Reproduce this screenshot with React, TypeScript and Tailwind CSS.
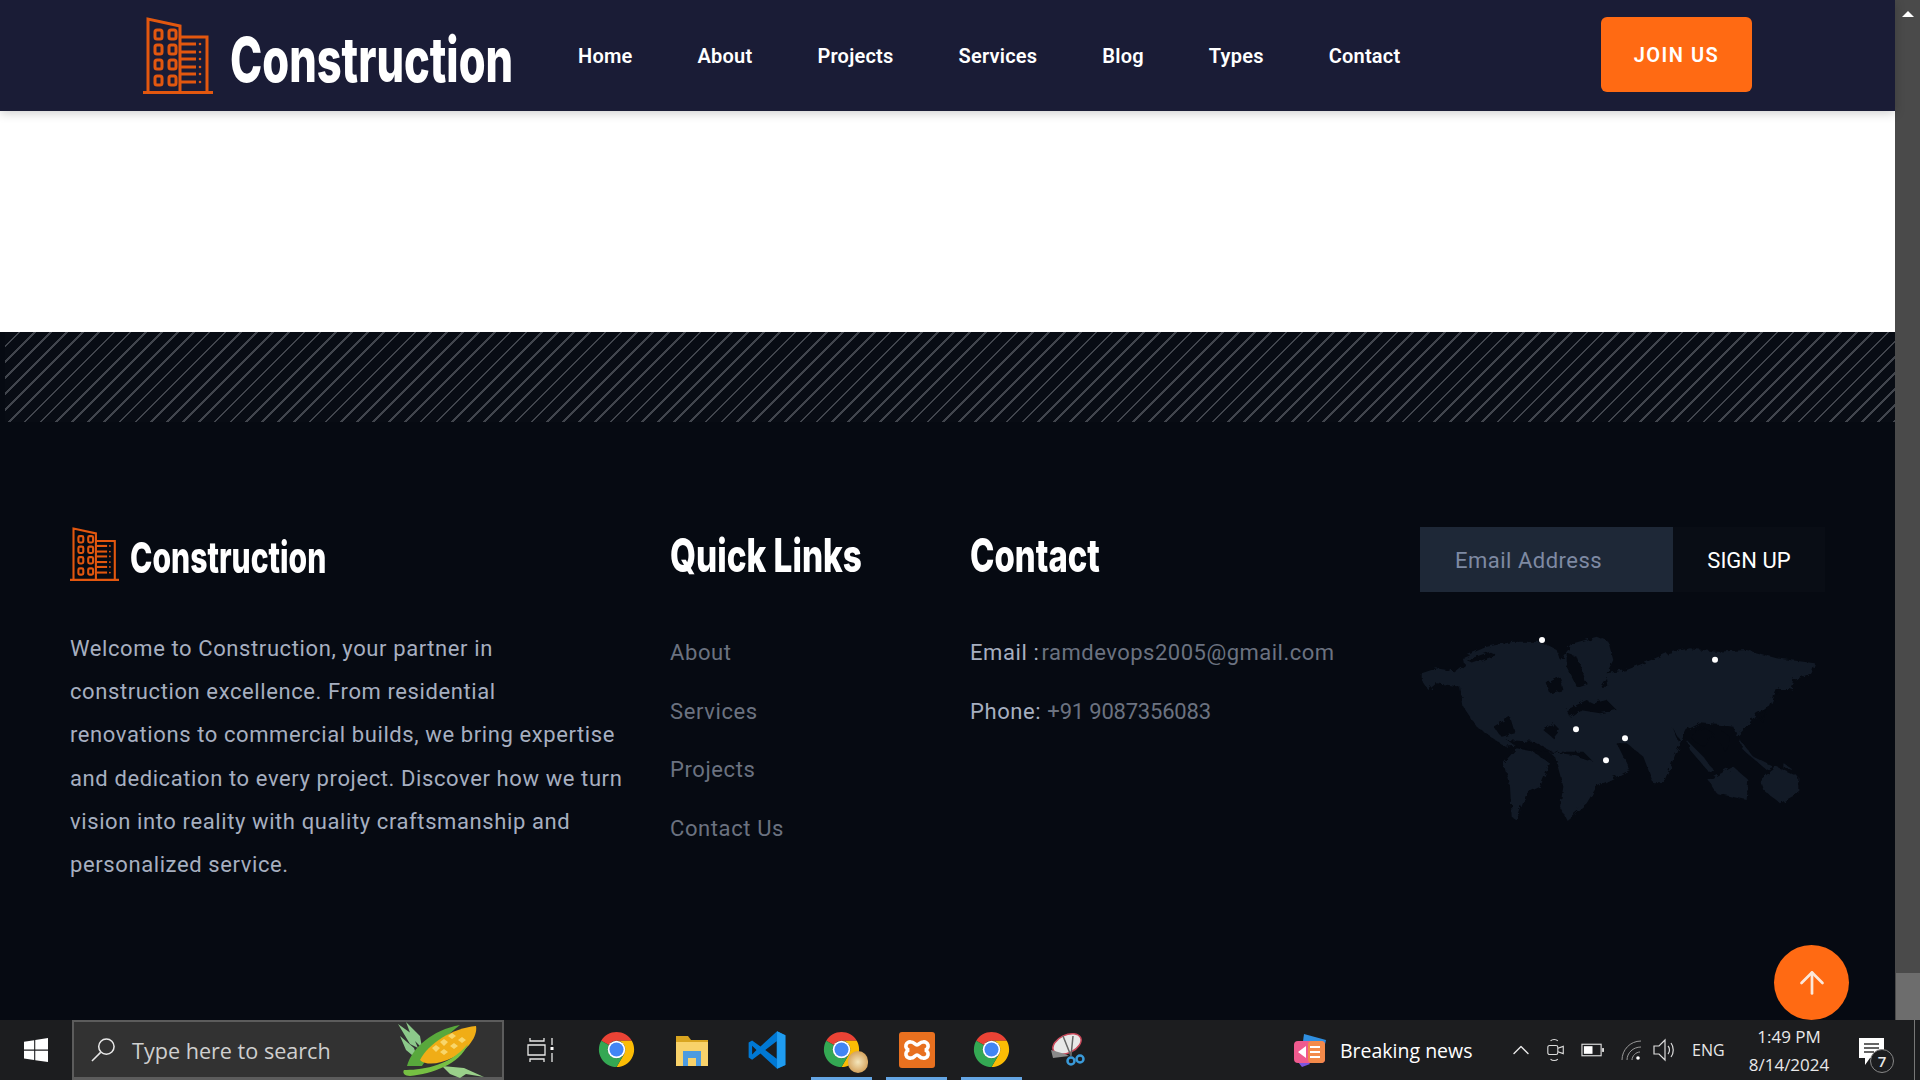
import { ArrowUp, ChevronUp } from "lucide-react";

const navItems = ["Home", "About", "Projects", "Services", "Blog", "Types", "Contact"];
const quickLinks = ["About", "Services", "Projects", "Contact Us"];
const aboutLines = [
  "Welcome to Construction, your partner in",
  "construction excellence. From residential",
  "renovations to commercial builds, we bring expertise",
  "and dedication to every project. Discover how we turn",
  "vision into reality with quality craftsmanship and",
  "personalized service.",
];

function BuildingLogo({ className }: { className: string }) {
  const rows = [13, 28, 43, 59];
  const lines = [27, 35, 42, 50, 57, 65];
  return (
    <svg viewBox="0 0 70 77" className={className} fill="none" stroke="#e2570f" strokeWidth="3">
      <path d="M5 75V2l32 7v66M37 20h27v55M0 75.500h70" />
      {rows.map((y) => (
        <g key={y}>
          <rect x="12" y={y} width="7" height="9" rx="2" />
          <rect x="26" y={y} width="7" height="9" rx="2" />
        </g>
      ))}
      {lines.map((y) => (
        <g key={y}>
          <path d={`M38 ${y}h15`} />
          <circle cx="57" cy={y} r="1.300" fill="#e2570f" stroke="none" />
        </g>
      ))}
    </svg>
  );
}

function Chrome() {
  return (
    <svg viewBox="3 3 42 42" className="h-[37px] w-[37px]">
      <path fill="#ea4335" d="M6.680 14A20 20 0 0 1 41.320 14H24a10 10 0 0 0-8.660 5z" />
      <path fill="#fbbc05" d="M41.320 14A20 20 0 0 1 24 44l8.660-15A10 10 0 0 0 24 14z" />
      <path fill="#34a853" d="M24 44A20 20 0 0 1 6.680 14l8.660 5a10 10 0 0 0 17.320 10z" />
      <circle cx="24" cy="24" r="10" fill="#fff" />
      <circle cx="24" cy="24" r="8" fill="#4285f4" />
    </svg>
  );
}

function WorldMap() {
  return (
    <svg viewBox="60 375 1215 570" className="mt-[43px] h-[190px] w-[405px]">
      <defs>
        <filter id="coast" x="-5%" y="-5%" width="110%" height="110%" colorInterpolationFilters="sRGB">
          <feTurbulence type="fractalNoise" baseFrequency="0.06" numOctaves="3" seed="4" />
          <feDisplacementMap in="SourceGraphic" scale="18" />
        </filter>
      </defs>
      <g filter="url(#coast)">
        <g fill="#121a26">
          <path d="M65 490l45-15 60 10 25-20-5-25 70-30 80-15 80 0 50 25 10 30 40-50 70-20 35 15 15 55-20 40 60-10 50-20 70-30 70-15 80 10 90-5 90 25 115 15-10 30-55 20-10 30-40 0-20 50-40 20-30 40-30 30-10-30-40-5-60-5-40 20-20 40-50 120-30 0-30-80-50-40-30 0 40 80-80 40-20 10-30 50-60 50-20-40 10-60-25-90-25-20-40-20-80 10-20-10-70-50-40-60-10-60-70-10-25 20-20-30z" />
          <path d="M310 760l40-45 50 10 50 35-30 70-40 20-30 80-15-10-5-90z" />
          <path d="M925 810l75-40 45 40-5 60-90-20z" />
          <path d="M1080 810l50-40 65 30 0 50-55 30-50-40z" />
          <path d="M860 690l50 50 30 40-10 10-60-70zM1020 690l40 50 60 30-20 10-70-60zM1150 760l30 20-30-5z" />
        </g>
        <g fill="#060a12">
          <path d="M440 520l40-20 10 40-40 10zM500 430l30 10 30 80-30 10-30-60zM280 650l50-30 15 50-40 10zM430 660l30-20 20 20-20 25zM500 600l60-30 20 10 40-10 30 30-50 10-60-10-30 20zM320 690l80 5 60 30 90 0 30 30-60-20-70-10-90-10zM815 650l25 40-5 5zM200 450l70-25 20 10-70 25zM600 530l20-30 5 30z" />
          <path d="M870 680l40-30 30 20-20 40-30-10zM960 660l30 20-10 50-20-30zM1100 590l-20 40 10 10zM1140 530l-20 30 15-10z" />
        </g>
      </g>
      <g fill="#fff">
        <circle cx="426" cy="390" r="9" />
        <circle cx="945" cy="449" r="9" />
        <circle cx="528" cy="658" r="9" />
        <circle cx="675" cy="685" r="9" />
        <circle cx="618" cy="751" r="9" />
      </g>
    </svg>
  );
}

function Corn() {
  return (
    <svg viewBox="0 0 88 56" className="h-[56px] w-[88px]">
      <path fill="#8cc98a" d="M0 2l14 10 6 14-8-4zM8 0l14 14 2 12-10-10zM2 14l14 12 4 12-12-10z" />
      <path fill="#9ad08a" d="M44 44l22 2 20 9-18-3-6 4-10-4z" />
      <path fill="#58a83c" d="M9 44C14 26 34 8 62 3 50 12 34 28 24 44z" />
      <path fill="#f0ad16" d="M22 38C30 22 54 6 78 4c2 10-8 24-24 32-12 6-26 8-32 2z" />
      <path fill="#f8d66a" d="M34 26l4-3 4 3-4 4zM42 20l4-3 4 3-4 4zM50 14l4-3 4 3-4 3zM42 30l4-3 4 3-4 3zM52 24l4-3 4 3-4 3zM60 18l4-3 4 3-4 3z" />
      <path fill="#76c043" d="M6 48c14 0 44-2 64-26-8 20-36 30-58 32-5 0-8-3-6-6z" />
    </svg>
  );
}

function Taskbar() {
  return (
    <div className="relative flex h-[60px] shrink-0 items-center bg-[#1c1d1f] font-['Open_Sans',sans-serif]">
      <div className="flex w-[72px] justify-center">
        <svg viewBox="0 0 26 26" className="h-[24px] w-[26px]" fill="#fff">
          <path d="M0 4l11-1.600v10H0zM12.200 2.200L26 0v12.400H12.200zM0 13.800h11v10L0 22.200zM12.200 13.800H26V26l-13.800-2z" />
        </svg>
      </div>
      <div className="flex h-[60px] w-[432px] items-center border-2 border-b-[3px] border-[#5c5c5c] bg-[#323232] pl-[17px]">
        <svg viewBox="0 0 26 26" className="h-[25px] w-[25px]" fill="none" stroke="#e8e8e8" strokeWidth="1.600">
          <circle cx="16" cy="10" r="8" />
          <path d="M10 16L1 25" />
        </svg>
        <span className="ml-[16px] flex-1 pt-[3px] text-[21.600px] text-[#cfcfcf]">Type here to search</span>
        <div className="mr-[16px] flex">
          <Corn />
        </div>
      </div>
      <div className="ml-[23px] w-[52px]">
        <svg viewBox="0 0 28 26" className="h-[26px] w-[28px]" fill="none" stroke="#e8e8e8" strokeWidth="1.300">
          <path d="M3 1v3h14V1M1 8h17v10H1zM3 25v-3h14v3M25 1v7M25 16v9" />
          <rect x="23.500" y="10" width="3" height="3" fill="#fff" stroke="none" />
        </svg>
      </div>
      <div className="flex h-full">
        <TaskIcon><Chrome /></TaskIcon>
        <TaskIcon>
          <svg viewBox="0 0 36 36" className="h-[36px] w-[36px]">
            <path fill="#d9a520" d="M2 4h12l3 4h17v8H2z" />
            <path fill="#f8d26a" d="M2 10h32v24H2z" />
            <path fill="#4d9be0" d="M9 34V19h18v15h-5v-8h-8v8z" />
          </svg>
        </TaskIcon>
        <TaskIcon>
          <svg viewBox="0 0 48 48" className="h-[42px] w-[42px]">
            <path fill="#0078d4" fillRule="evenodd" d="M35.500 2.500L16.500 20 7 13l-4 2.500v17L7 35l9.500-7 19 17.500L45 41V7zM35 14L22 24l13 10zM7 19l5 5-5 5z" />
            <path fill="#1f9cf0" d="M35.500 2.500L45 7v34l-9.500 4.500V34l0-20z" />
          </svg>
        </TaskIcon>
        <TaskIcon active>
          <div className="relative flex">
            <Chrome />
            <div className="absolute right-[-8px] bottom-[-5px] h-[22px] w-[20px] rounded-full bg-[radial-gradient(circle,#f4e6bc,#c98a3a)]" />
          </div>
        </TaskIcon>
        <TaskIcon active>
          <div className="flex h-[36px] w-[36px] items-center justify-center rounded-[3px] bg-[#e8701f]">
            <svg viewBox="0 0 28 28" className="h-[28px] w-[28px]" fill="none" stroke="#fff" strokeWidth="3.600">
              <path d="M8 6a4 4 0 0 0-2 8 4 4 0 0 0 2 8c3 0 4-3 6-3s3 3 6 3a4 4 0 0 0 2-8 4 4 0 0 0-2-8c-3 0-4 3-6 3s-3-3-6-3z" />
            </svg>
          </div>
        </TaskIcon>
        <TaskIcon active><Chrome /></TaskIcon>
        <TaskIcon>
          <svg viewBox="0 0 36 36" className="h-[36px] w-[36px]">
            <ellipse cx="18" cy="12" rx="15" ry="9" fill="#e8e8e8" stroke="#c8485a" strokeWidth="1.500" transform="rotate(-25 18 12)" />
            <path fill="#8a8a8a" d="M2 18l14 4 4 2-16 2z" />
            <path d="M14 4l8 20M24 4l-2 20" stroke="#666" strokeWidth="1.500" />
            <circle cx="22" cy="29" r="3.500" fill="none" stroke="#3a9ad9" strokeWidth="2.500" />
            <circle cx="31" cy="27" r="3.500" fill="none" stroke="#3a9ad9" strokeWidth="2.500" />
          </svg>
        </TaskIcon>
      </div>
      <div className="ml-auto flex h-full items-center">
        <svg viewBox="0 0 36 36" className="h-[38px] w-[36px]">
          <path fill="#2f8fe0" d="M12 2l22 6-5 22-20-6z" />
          <path fill="#7a55e0" d="M2 12l16 20-8 3-8-10z" />
          <rect x="2" y="9" width="31" height="22" rx="4" fill="#ef5a8e" />
          <rect x="16" y="9" width="17" height="22" rx="4" fill="#f38a4a" />
          <path fill="#fff" d="M6 20l8-6v12zM18 14h10v2H18zM18 19h10v2H18zM18 24h10v2H18z" />
        </svg>
        <span className="ml-[12px] w-[149px] pt-[1px] text-[19.500px] text-white">Breaking news</span>
        <ChevronUp className="ml-[18px] h-[28px] w-[28px] text-[#e8e8e8]" strokeWidth={1.200} />
        <svg viewBox="0 0 22 26" className="ml-[11px] h-[26px] w-[20px]" fill="none" stroke="#ddd" strokeWidth="1.200">
          <rect x="2" y="8" width="11" height="10" rx="2" />
          <path d="M13 11l6-2v8l-6-2M5 3c2-2 6-2 8 0M5 23c2 2 6 2 8 0" />
        </svg>
        <svg viewBox="0 0 24 14" className="ml-[15px] h-[14px] w-[23px]" fill="none" stroke="#ddd" strokeWidth="1.200">
          <rect x="1" y="1" width="20" height="12" />
          <rect x="3" y="3" width="9" height="8" fill="#fff" stroke="none" />
          <rect x="22" y="5" width="2" height="4" fill="#ddd" stroke="none" />
        </svg>
        <svg viewBox="0 0 22 22" className="ml-[16px] h-[22px] w-[22px]" fill="none" stroke="#999" strokeWidth="1">
          <path d="M2 21C2 11 10 2 21 2M7 21c0-7 6-13 14-13M12 21c0-4 4-8 8-8" />
          <circle cx="18" cy="19" r="1.800" fill="#fff" stroke="none" />
        </svg>
        <svg viewBox="0 0 24 24" className="ml-[10px] h-[24px] w-[24px]" fill="none" stroke="#ddd" strokeWidth="1.200">
          <path d="M2 8h5l6-6v20l-6-6H2zM16 8c2 2 2 6 0 8M19 5c3 4 3 10 0 14" />
        </svg>
        <span className="ml-[16px] w-[40px] text-[16px] text-[#e8e8e8]">ENG</span>
        <div className="ml-[11px] flex w-[92px] flex-col items-center pt-[1px] text-[17px] leading-[28px] text-[#e8e8e8]">
          <span>1:49 PM</span>
          <span>8/14/2024</span>
        </div>
        <div className="relative ml-[24px] mr-[36px] h-[24px] w-[25px]">
          <svg viewBox="0 0 25 28" className="h-[28px] w-[25px]">
            <path fill="#fff" d="M0 0h25v20H11l-5 7v-7H0z" />
            <path stroke="#333" strokeWidth="1.300" d="M5 6h15M5 10h15M5 14h10" />
          </svg>
          <span className="absolute top-[11px] left-[11px] flex h-[24px] w-[24px] items-center justify-center rounded-full border border-[#888] bg-[#1c1d1f] text-[15px] font-semibold text-[#e8e8e8]">
            7
          </span>
        </div>
      </div>
      <div className="absolute top-0 right-[5px] h-full w-px bg-[#777]" />
    </div>
  );
}

function TaskIcon({ children, active = false }: { children: React.ReactNode; active?: boolean }) {
  return (
    <div className="relative flex h-full w-[75px] items-center justify-center pb-[1px]">
      {children}
      {active ? <div className="absolute bottom-0 left-[7px] h-[3px] w-[61px] bg-[#64a5e3]" /> : null}
    </div>
  );
}

export default function App() {
  return (
    <div className="relative flex h-screen flex-col overflow-hidden font-['Roboto',sans-serif]">
      <div className="flex min-h-0 flex-1">
        <div className="flex min-w-0 flex-1 flex-col bg-[#060a12]">
          <header className="relative z-10 flex h-[111px] shrink-0 items-center bg-[#1a1c36] pl-[143px] shadow-[0_2px_10px_rgba(0,0,0,0.2)]">
            <BuildingLogo className="h-[77px] w-[70px]" />
            <span className="ml-[17px] w-[330px] origin-left scale-x-[0.7] pt-[8px] font-['Inter',sans-serif] text-[62px] leading-none font-extrabold whitespace-nowrap text-white">
              Construction
            </span>
            <nav className="ml-[18px] flex gap-[65px] text-[20px] font-semibold tracking-[0.22px] text-white">
              {navItems.map((item) => (
                <a key={item} href="#">{item}</a>
              ))}
            </nav>
            <a href="#" className="absolute top-[17px] left-[1601px] flex h-[75px] w-[151px] items-center justify-center rounded-[6px] bg-[#ff6a13] text-[20px] font-semibold tracking-[1.500px] text-white">
              JOIN US
            </a>
          </header>
          <div className="h-[221px] shrink-0 bg-white" />
          <div className="h-[90px] shrink-0 pl-[5px]">
            <div className="h-full bg-[repeating-linear-gradient(135deg,#080c14_0,#080c14_9.300px,#41454d_9.300px,#41454d_11.200px)]" />
          </div>
          <footer className="grid flex-1 grid-cols-[600px_300px_450px_405px] pt-[105px] pl-[70px]">
            <div>
              <div className="flex h-[54px] items-center">
                <BuildingLogo className="h-[54px] w-[49px]" />
                <span className="ml-[11px] origin-left scale-x-[0.7] pt-[6px] font-['Inter',sans-serif] text-[43px] leading-none font-extrabold whitespace-nowrap text-white">
                  Construction
                </span>
              </div>
              <p className="mt-[46px] text-[22px] leading-[43.200px] tracking-[0.6px] whitespace-nowrap text-[#a6afc0]">
                {aboutLines.map((line) => (
                  <span key={line} className="block">{line}</span>
                ))}
              </p>
            </div>
            <div>
              <h3 className="h-[56px] origin-left scale-x-[0.725] font-['Inter',sans-serif] text-[46px] leading-[56px] font-extrabold whitespace-nowrap text-white">Quick Links</h3>
              <ul className="mt-[55px] flex flex-col gap-[29.500px] text-[22px] leading-[29px] tracking-[0.6px] text-[#6b7280]">
                {quickLinks.map((link) => (
                  <li key={link}>{link}</li>
                ))}
              </ul>
            </div>
            <div>
              <h3 className="h-[56px] origin-left scale-x-[0.715] font-['Inter',sans-serif] text-[46px] leading-[56px] font-extrabold whitespace-nowrap text-white">Contact</h3>
              <ul className="mt-[55px] flex flex-col gap-[29.500px] text-[22px] leading-[29px] tracking-[0.6px] text-[#a6afc0]">
                <li>Email :<span className="ml-[2px] tracking-[0.5px] text-[#6b7280]">ramdevops2005@gmail.com</span></li>
                <li>Phone: <span className="tracking-[-0.2px] text-[#6b7280]">+91 9087356083</span></li>
              </ul>
            </div>
            <div>
              <div className="flex h-[65px]">
                <div className="flex w-[253px] items-center bg-[#1e2837] pt-[2px] pl-[35px] text-[22px] tracking-[0.5px] text-[#7e8aa3]">Email Address</div>
                <button className="flex-1 bg-[#090d15] pt-[2px] text-[22px] text-white">SIGN UP</button>
              </div>
              <WorldMap />
            </div>
          </footer>
        </div>
        <div className="relative w-[25px] shrink-0 bg-[#4a4a4a]">
          <div className="absolute top-[11px] left-[7px] h-0 w-0 border-x-[6px] border-b-[6px] border-x-transparent border-b-white" />
          <div className="absolute right-0 bottom-0 left-[1px] h-[47px] bg-[#6d6d6d]" />
        </div>
      </div>
      <Taskbar />
      <a href="#" className="absolute top-[945px] left-[1774px] flex h-[75px] w-[75px] items-center justify-center rounded-full bg-[#ff6a13]">
        <ArrowUp className="h-[36px] w-[36px] text-[#fbe7da]" strokeWidth={1.800} />
      </a>
    </div>
  );
}
